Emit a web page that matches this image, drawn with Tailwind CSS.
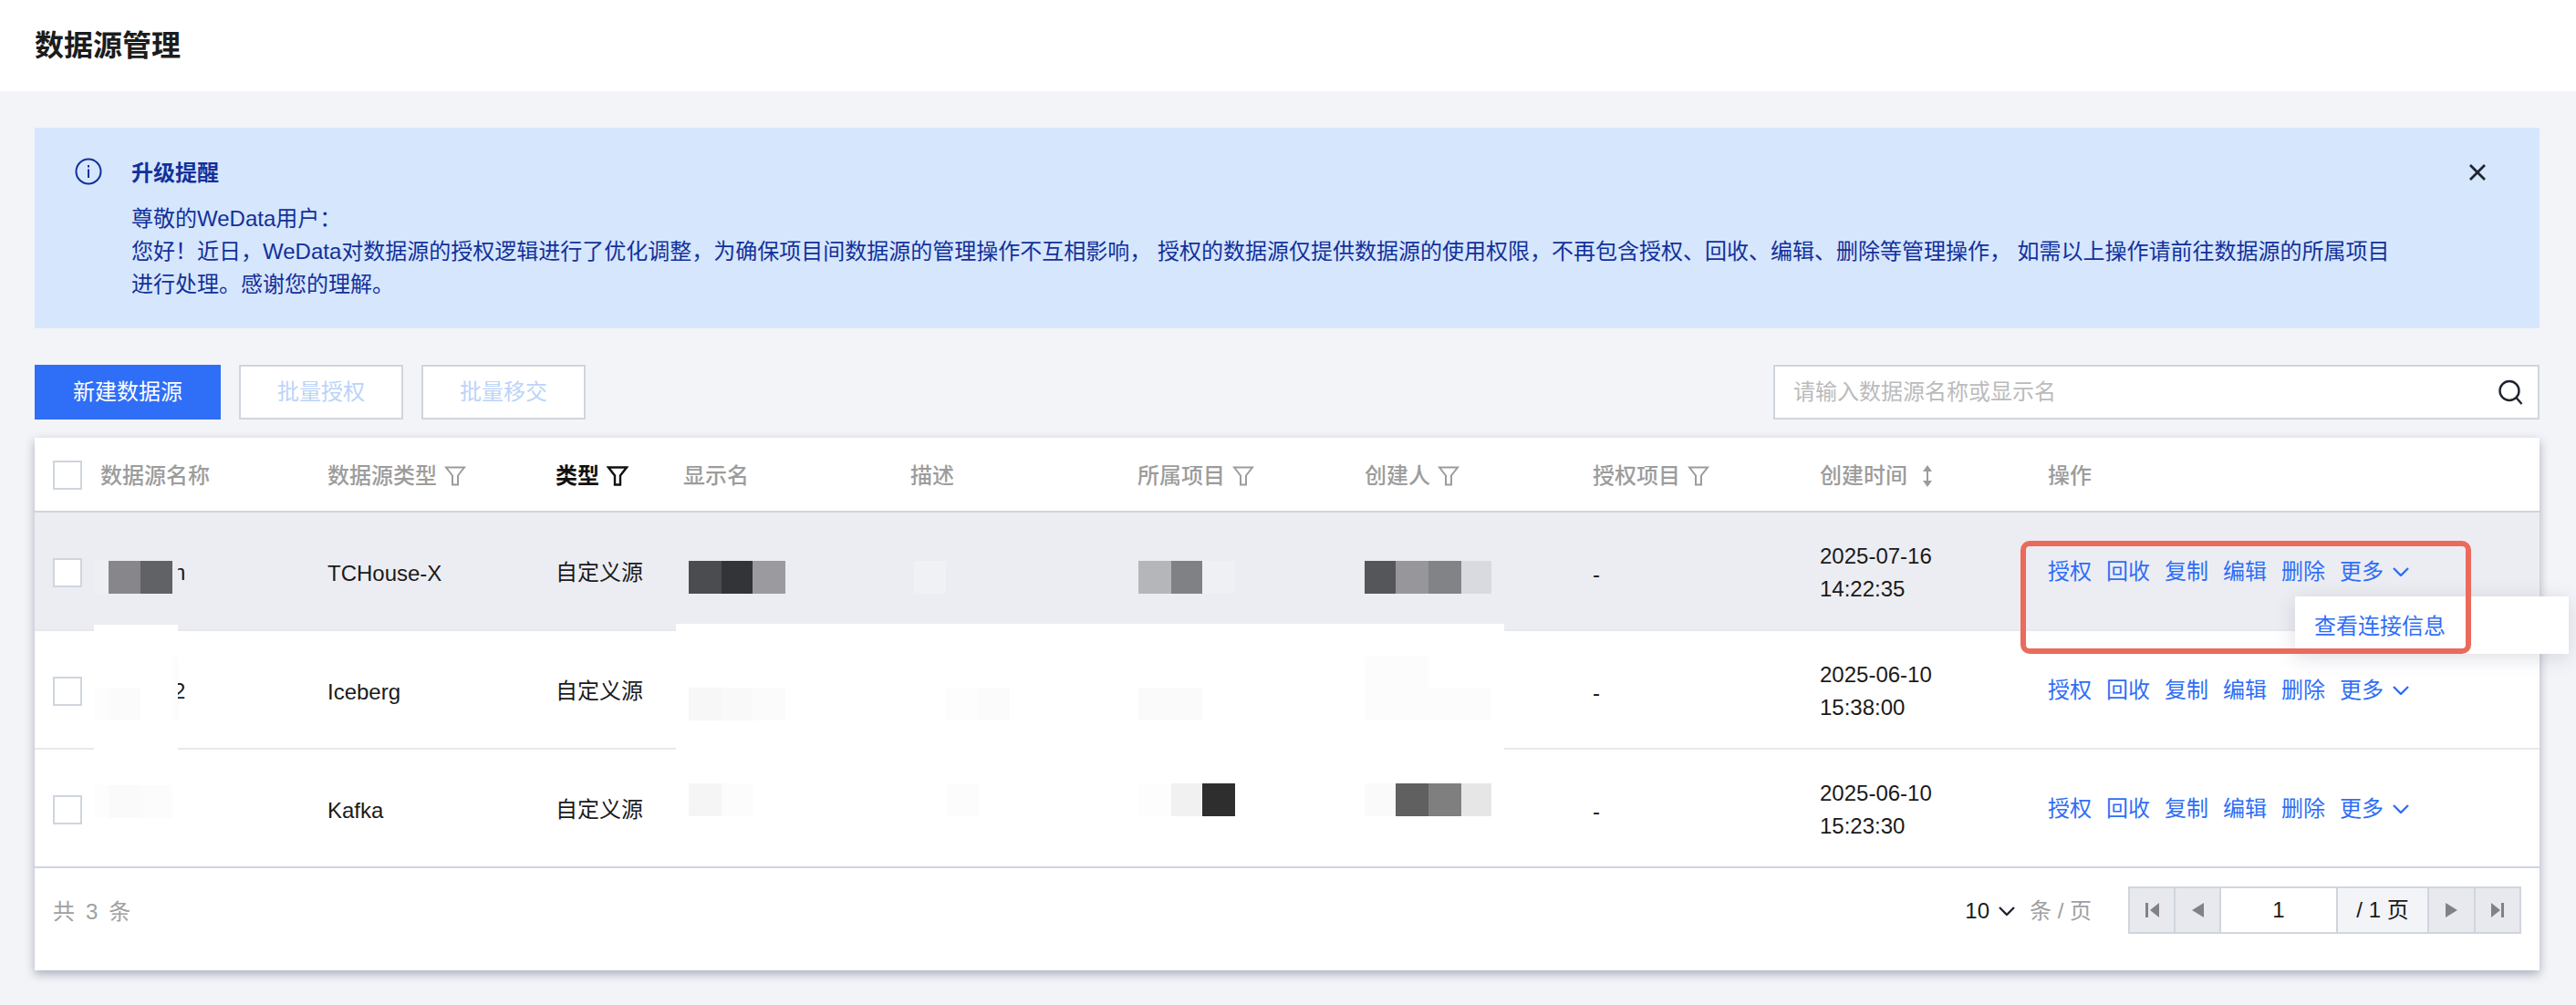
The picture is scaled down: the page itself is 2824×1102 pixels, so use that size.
<!DOCTYPE html>
<html lang="zh-CN">
<head>
<meta charset="utf-8"/>
<title>数据源管理</title>
<script src="https://cdn.jsdelivr.net/npm/@tailwindcss/browser@4"></script>
</head>
<body class="bg-[#f3f4f8] font-['Liberation_Sans','Noto_Sans_CJK_SC',sans-serif] text-[24px] leading-9 text-[#1a1a1a]">
<div class="relative h-[1102px] w-[2824px] overflow-hidden">

  <!-- Page title -->
  <header class="flex h-[100px] items-center bg-white pl-[38px]">
    <h1 class="text-[32px] font-bold leading-10 text-[#1c1c1c]">数据源管理</h1>
  </header>

  <main class="pl-[38px] pr-[40px]">
    <!-- Upgrade notice -->
    <section class="relative mt-10 flex h-[220px] bg-[#d6e6fd] pl-[44px] pt-[32px] text-[#12319a]">
      <svg class="mt-[1px] h-[30px] w-[30px] shrink-0" viewBox="0 0 30 30" fill="none" stroke="currentColor">
        <circle cx="15" cy="15" r="13.5" stroke-width="2"/>
        <path d="M15 12.5v9.5" stroke-width="2"/>
        <path d="M15 8v2.5" stroke-width="2"/>
      </svg>
      <div class="ml-[32px] whitespace-nowrap">
        <h2 class="font-bold">升级提醒</h2>
        <p class="mt-[14px]">尊敬的WeData用户：<br/>您好！近日，WeData对数据源的授权逻辑进行了优化调整，为确保项目间数据源的管理操作不互相影响， 授权的数据源仅提供数据源的使用权限，不再包含授权、回收、编辑、删除等管理操作， 如需以上操作请前往数据源的所属项目<br/>进行处理。感谢您的理解。</p>
      </div>
      <svg class="absolute right-[58px] top-[40px] h-[18px] w-[20px] text-[#1f2430]" viewBox="0 0 20 18" fill="none" stroke="currentColor" stroke-width="2.8">
        <path d="M2 1l16 16M18 1L2 17"/>
      </svg>
    </section>

    <!-- Toolbar -->
    <div class="mt-10 flex h-[60px] justify-between">
      <div class="flex gap-5">
        <button class="w-[204px] bg-[#2f6ef6] text-white">新建数据源</button>
        <button class="w-[180px] border-2 border-[#cfd5de] bg-white text-[#bcd4f8]">批量授权</button>
        <button class="w-[180px] border-2 border-[#cfd5de] bg-white text-[#bcd4f8]">批量移交</button>
      </div>
      <div class="flex w-[840px] items-center justify-between border-2 border-[#cfd5de] bg-white pl-5 pr-[16px]">
        <span class="text-[#bbbbbb]">请输入数据源名称或显示名</span>
        <svg class="h-7 w-7 text-[#1f2430]" viewBox="0 0 28 28" fill="none" stroke="currentColor" stroke-width="2.4">
          <circle cx="13" cy="12.5" r="10.5"/>
          <path d="M20.5 20l6 7"/>
        </svg>
      </div>
    </div>

    <!-- Table -->
    <section class="mt-5 bg-white shadow-[0_4px_10px_rgba(60,68,100,0.4)]">
      <div class="grid h-[82px] grid-cols-[72px_249px_250px_140px_249px_249px_249px_250px_249px_250px_1fr] items-center border-b-2 border-[#cfd5de] pt-1 font-medium text-[#9c9c9c]">
        <div class="pb-[2px] pl-5"><span class="block h-8 w-8 border-2 border-[#cfd5de] bg-white"></span></div>
        <div>数据源名称</div>
        <div class="flex items-center gap-2">数据源类型
          <svg class="h-[22px] w-6" viewBox="0 0 24 22" fill="none" stroke="currentColor" stroke-width="2"><path d="M2 1.5h20l-7 9v10h-6v-10z"/></svg>
        </div>
        <div class="flex items-center gap-2 font-bold text-[#111111]">类型
          <svg class="h-[22px] w-6" viewBox="0 0 24 22" fill="none" stroke="currentColor" stroke-width="2.4"><path d="M2 1.5h20l-7 9v10h-6v-10z"/></svg>
        </div>
        <div>显示名</div>
        <div>描述</div>
        <div class="flex items-center gap-2">所属项目
          <svg class="h-[22px] w-6" viewBox="0 0 24 22" fill="none" stroke="currentColor" stroke-width="2"><path d="M2 1.5h20l-7 9v10h-6v-10z"/></svg>
        </div>
        <div class="flex items-center gap-2">创建人
          <svg class="h-[22px] w-6" viewBox="0 0 24 22" fill="none" stroke="currentColor" stroke-width="2"><path d="M2 1.5h20l-7 9v10h-6v-10z"/></svg>
        </div>
        <div class="flex items-center gap-2">授权项目
          <svg class="h-[22px] w-6" viewBox="0 0 24 22" fill="none" stroke="currentColor" stroke-width="2"><path d="M2 1.5h20l-7 9v10h-6v-10z"/></svg>
        </div>
        <div class="flex items-center gap-[16px]">创建时间
          <svg class="h-6 w-3" viewBox="0 0 12 24" fill="currentColor"><path d="M6 0l5 7H7v10h4l-5 7-5-7h4V7H1z"/></svg>
        </div>
        <div>操作</div>
      </div>

      <!-- Row 1 -->
      <div class="grid h-[130px] grid-cols-[72px_249px_250px_140px_249px_249px_249px_250px_249px_250px_1fr] items-center border-b-2 border-[#e7e8ee] bg-[#ecedf2] pt-[3px]">
        <div class="pl-5"><span class="block h-8 w-8 border-2 border-[#cfd5de] bg-white"></span></div>
        <div class="pl-[80px]">n</div>
        <div class="pt-[2px]">TCHouse-X</div>
        <div>自定义源</div>
        <div></div>
        <div></div>
        <div></div>
        <div></div>
        <div class="pt-1">-</div>
        <div>2025-07-16<br/>14:22:35</div>
        <div class="flex items-center gap-4 pb-0.5 text-[#2f6ef6]">
          <span>授权</span><span>回收</span><span>复制</span><span>编辑</span><span>删除</span>
          <span class="flex items-center gap-[10px]">更多
            <svg class="h-[10px] w-[18px]" viewBox="0 0 18 10" fill="none" stroke="currentColor" stroke-width="2.4"><path d="M1 1l8 8 8-8"/></svg>
          </span>
        </div>
      </div>

      <!-- Row 2 -->
      <div class="grid h-[130px] grid-cols-[72px_249px_250px_140px_249px_249px_249px_250px_249px_250px_1fr] items-center border-b-2 border-[#e7e8ee] pt-[3px]">
        <div class="pl-5"><span class="block h-8 w-8 border-2 border-[#cfd5de] bg-white"></span></div>
        <div class="pl-[80px]">2</div>
        <div class="pt-[2px]">Iceberg</div>
        <div>自定义源</div>
        <div></div>
        <div></div>
        <div></div>
        <div></div>
        <div class="pt-1">-</div>
        <div>2025-06-10<br/>15:38:00</div>
        <div class="flex items-center gap-4 pb-0.5 text-[#2f6ef6]">
          <span>授权</span><span>回收</span><span>复制</span><span>编辑</span><span>删除</span>
          <span class="flex items-center gap-[10px]">更多
            <svg class="h-[10px] w-[18px]" viewBox="0 0 18 10" fill="none" stroke="currentColor" stroke-width="2.4"><path d="M1 1l8 8 8-8"/></svg>
          </span>
        </div>
      </div>

      <!-- Row 3 -->
      <div class="grid h-[130px] grid-cols-[72px_249px_250px_140px_249px_249px_249px_250px_249px_250px_1fr] items-center border-b-2 border-[#cfd5de] pt-[3px]">
        <div class="pl-5"><span class="block h-8 w-8 border-2 border-[#cfd5de] bg-white"></span></div>
        <div></div>
        <div class="pt-[2px]">Kafka</div>
        <div>自定义源</div>
        <div></div>
        <div></div>
        <div></div>
        <div></div>
        <div class="pt-1">-</div>
        <div>2025-06-10<br/>15:23:30</div>
        <div class="flex items-center gap-4 pb-0.5 text-[#2f6ef6]">
          <span>授权</span><span>回收</span><span>复制</span><span>编辑</span><span>删除</span>
          <span class="flex items-center gap-[10px]">更多
            <svg class="h-[10px] w-[18px]" viewBox="0 0 18 10" fill="none" stroke="currentColor" stroke-width="2.4"><path d="M1 1l8 8 8-8"/></svg>
          </span>
        </div>
      </div>

      <!-- Footer -->
      <div class="flex h-[112px] items-center justify-between pb-5 pl-5 pr-5">
        <div class="mt-1 flex gap-3 text-[#a0a0a0]"><span>共</span><span>3</span><span>条</span></div>
        <div class="flex items-center">
          <span class="mt-[2px]">10</span>
          <svg class="ml-[10px] mt-[2px] h-[10px] w-[18px] text-[#1f2430]" viewBox="0 0 18 10" fill="none" stroke="currentColor" stroke-width="2.4"><path d="M1 1l8 8 8-8"/></svg>
          <span class="ml-4 mt-[2px] text-[#a0a0a0]">条 / 页</span>
          <div class="ml-10 flex h-[52px] border-2 border-[#d0d5de]">
            <span class="flex w-[50px] items-center justify-center border-r-2 border-[#d0d5de] bg-[#e7e9ef]">
              <svg class="h-4 w-[15px] text-[#7f8388]" viewBox="0 0 15 16" fill="currentColor"><rect width="3" height="16"/><path d="M15 0v16L5 8z"/></svg>
            </span>
            <span class="flex w-[50px] items-center justify-center border-r-2 border-[#d0d5de] bg-[#e7e9ef]">
              <svg class="h-4 w-[13px] text-[#7f8388]" viewBox="0 0 13 16" fill="currentColor"><path d="M13 0v16L0 8z"/></svg>
            </span>
            <span class="flex w-[128px] items-center justify-center border-r-2 border-[#d0d5de] bg-white">1</span>
            <span class="flex w-[100px] items-center justify-center border-r-2 border-[#d0d5de] bg-[#f3f4f8]">/ 1 页</span>
            <span class="flex w-[51px] items-center justify-center border-r-2 border-[#d0d5de] bg-[#e7e9ef]">
              <svg class="h-4 w-[13px] text-[#7f8388]" viewBox="0 0 13 16" fill="currentColor"><path d="M0 0v16l13-8z"/></svg>
            </span>
            <span class="flex w-[48px] items-center justify-center bg-[#e7e9ef]">
              <svg class="h-4 w-[14px] text-[#7f8388]" viewBox="0 0 14 16" fill="currentColor"><path d="M0 0v16l10-8z"/><rect x="11" width="3" height="16"/></svg>
            </span>
          </div>
        </div>
      </div>
    </section>
  </main>

  <!-- Redaction patches laid over the table -->
  <div class="absolute left-[103px] top-[685px] h-[138px] w-[92px] bg-white"></div>
  <div class="absolute left-[741px] top-[684px] h-[139px] w-[908px] bg-white"></div>

  <div class="absolute left-[103px] top-[615px] flex h-9">
    <i class="w-4 bg-[#eeeff3]"></i><i class="w-[35px] bg-[#87878b]"></i><i class="w-[35px] bg-[#616266]"></i><i class="w-[6px] bg-[#ecedf2]"></i>
  </div>
  <div class="absolute left-[755px] top-[615px] flex h-9">
    <i class="w-9 bg-[#4b4c50]"></i><i class="w-[34px] bg-[#333438]"></i><i class="w-9 bg-[#9b9b9f]"></i>
  </div>
  <div class="absolute left-[1002px] top-[615px] h-9 w-[35px] bg-[#f0f1f4]"></div>
  <div class="absolute left-[1248px] top-[615px] flex h-9">
    <i class="w-9 bg-[#b5b6ba]"></i><i class="w-[34px] bg-[#808185]"></i><i class="w-9 bg-[#eff0f3]"></i>
  </div>
  <div class="absolute left-[1496px] top-[615px] flex h-9">
    <i class="w-[34px] bg-[#55565a]"></i><i class="w-9 bg-[#97979b]"></i><i class="w-9 bg-[#828387]"></i><i class="w-[33px] bg-[#d9dadf]"></i>
  </div>

  <div class="absolute left-[103px] top-[754px] flex h-9">
    <i class="w-4 bg-[#fdfdfd]"></i><i class="w-[35px] bg-[#fbfbfb]"></i>
  </div>
  <div class="absolute left-[189px] top-[720px] h-[70px] w-[6px] bg-[#fcfcfc]"></div>
  <div class="absolute left-[755px] top-[754px] flex h-9">
    <i class="w-9 bg-[#f7f7f7]"></i><i class="w-[34px] bg-[#f9f9f9]"></i><i class="w-9 bg-[#fbfbfb]"></i>
  </div>
  <div class="absolute left-[1037px] top-[754px] flex h-9">
    <i class="w-9 bg-[#fdfdfd]"></i><i class="w-[34px] bg-[#fbfbfb]"></i>
  </div>
  <div class="absolute left-[1248px] top-[754px] h-9 w-[70px] bg-[#fafafa]"></div>
  <div class="absolute left-[1496px] top-[720px] h-[34px] w-[70px] bg-[#fcfcfc]"></div>
  <div class="absolute left-[1496px] top-[754px] h-9 w-[139px] bg-[#fcfcfc]"></div>

  <div class="absolute left-[103px] top-[861px] flex h-9">
    <i class="w-4 bg-[#fdfdfd]"></i><i class="w-[35px] bg-[#fafafa]"></i><i class="w-[35px] bg-[#fcfcfc]"></i>
  </div>
  <div class="absolute left-[755px] top-[859px] flex h-9">
    <i class="w-9 bg-[#f5f5f5]"></i><i class="w-[34px] bg-[#fcfcfc]"></i>
  </div>
  <div class="absolute left-[1037px] top-[859px] h-9 w-9 bg-[#fcfcfc]"></div>
  <div class="absolute left-[1248px] top-[859px] flex h-9">
    <i class="w-9 bg-[#fdfdfd]"></i><i class="w-[34px] bg-[#f1f1f1]"></i><i class="w-9 bg-[#2e2e2e]"></i>
  </div>
  <div class="absolute left-[1496px] top-[859px] flex h-9">
    <i class="w-[34px] bg-[#fafafa]"></i><i class="w-9 bg-[#606060]"></i><i class="w-9 bg-[#7f7f7f]"></i><i class="w-[33px] bg-[#e6e6e6]"></i>
  </div>

  <!-- More menu -->
  <div class="absolute left-[2516px] top-[654px] h-[63px] w-[300px] bg-white pl-[21px] pt-[15px] text-[#2f6ef6] shadow-[0_4px_20px_rgba(70,78,110,0.18)]">查看连接信息</div>

  <!-- Annotation box -->
  <div class="absolute left-[2215px] top-[593px] h-[124px] w-[494px] rounded-[10px] border-[6px] border-[#ea6b5b]"></div>
</div>
</body>
</html>
